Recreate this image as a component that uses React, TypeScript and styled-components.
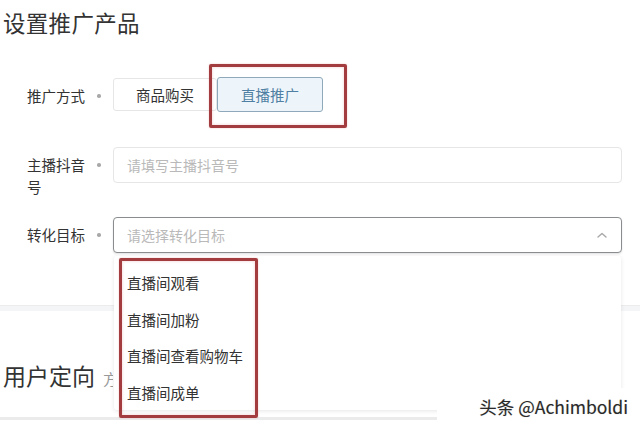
import styled, { createGlobalStyle } from "styled-components";

const GlobalStyle = createGlobalStyle`
  html, body {
    margin: 0;
    padding: 0;
    background: #fff;
  }
  body {
    font-family: "Noto Sans CJK SC", "Noto Sans", "Liberation Sans", sans-serif;
    color: #333;
  }
`;

const Page = styled.div`
  position: relative;
  width: 640px;
  height: 424px;
  overflow: hidden;
  background: #fff;
  display: flex;
  flex-direction: column;
`;

const Title = styled.h2`
  margin: 7px 0 0 3px;
  font-size: 22.5px;
  font-weight: 400;
  line-height: 30px;
  letter-spacing: 0.3px;
  color: #333;
`;

const Form = styled.div`
  margin-top: 41px;
  padding-left: 27px;
  padding-right: 18px;
  display: flex;
  flex-direction: column;
  gap: 35px;
`;

const Row = styled.div<{ $h: number; $gapFix?: number }>`
  height: ${(p) => p.$h}px;
  margin-top: ${(p) => p.$gapFix ?? 0}px;
  display: flex;
  align-items: flex-start;
`;

const Label = styled.div<{ $pad: number }>`
  width: 60px;
  padding-top: ${(p) => p.$pad}px;
  font-size: 14.5px;
  line-height: 22px;
  color: #333;
`;

const Required = styled.span<{ $pad: number }>`
  width: 26px;
  height: 22px;
  margin-top: ${(p) => p.$pad}px;
  display: flex;
  align-items: center;
  justify-content: center;
  padding-right: 2px;
  box-sizing: border-box;

  &::before {
    content: "";
    width: 3.5px;
    height: 3.5px;
    border-radius: 50%;
    background: #a9a9a9;
  }
`;

const Segment = styled.div`
  display: flex;
  height: 100%;
`;

const SegButton = styled.div<{ $active?: boolean }>`
  position: relative;
  box-sizing: border-box;
  width: ${(p) => (p.$active ? 106 : 104)}px;
  height: ${(p) => (p.$active ? 35 : 33)}px;
  margin-top: ${(p) => (p.$active ? -1 : 0)}px;
  display: flex;
  align-items: center;
  justify-content: center;
  font-size: 14.5px;
  color: ${(p) => (p.$active ? "#4f7fa3" : "#333")};
  background: ${(p) => (p.$active ? "#eef5fa" : "#fff")};
  border: 1px solid ${(p) => (p.$active ? "#8fa9bb" : "#e6e6e6")};
  border-radius: 3px;
`;

const Highlight = styled.div<{ $t: number; $l: number; $w: number; $h: number }>`
  position: absolute;
  top: ${(p) => p.$t}px;
  left: ${(p) => p.$l}px;
  width: ${(p) => p.$w}px;
  height: ${(p) => p.$h}px;
  box-sizing: border-box;
  border: 3px solid #a23c3e;
  border-radius: 2px;
  box-shadow: inset 0 0 3px rgba(220, 110, 110, 0.35), 0 0 2px rgba(220, 110, 110, 0.4);
  pointer-events: none;
`;

const Field = styled.div<{ $focused?: boolean }>`
  position: relative;
  flex: 1;
  box-sizing: border-box;
  height: 36px;
  display: flex;
  align-items: center;
  justify-content: space-between;
  padding: 0 14px 0 13px;
  border: 1px solid ${(p) => (p.$focused ? "#8a8d90" : "#e6e6e6")};
  border-radius: 4px;
  box-shadow: ${(p) => (p.$focused ? "0 1px 2px rgba(0,0,0,0.12)" : "none")};
  background: #fff;
`;

const Placeholder = styled.span`
  font-size: 14px;
  color: #b9b9b9;
`;

const Dropdown = styled.div`
  position: absolute;
  top: 38px;
  left: 0;
  right: 0;
  height: 154px;
  box-sizing: border-box;
  padding-top: 9px;
  background: #fff;
  border-radius: 3px;
  box-shadow: 0 1px 4px rgba(0, 0, 0, 0.1);
  z-index: 2;
`;

const Option = styled.div`
  height: 36.5px;
  line-height: 36.5px;
  padding-left: 13px;
  font-size: 14.5px;
  color: #333;
`;

const Divider = styled.div`
  margin-top: 52px;
  height: 5px;
  background: #f4f5f6;
  border-top: 1px solid #ececec;
`;

const SectionTitle = styled.div`
  margin: 48px 0 0 3px;
  display: flex;
  align-items: baseline;
  gap: 8px;
  line-height: 32px;
`;

const SectionName = styled.span`
  font-size: 23px;
  color: #333;
`;

const SectionHint = styled.span`
  width: 10px;
  overflow: hidden;
  white-space: nowrap;
  font-size: 15px;
  color: #999;
`;

const BottomBar = styled.div`
  margin-top: 22px;
  height: 3px;
  background: #ebebeb;
`;

const Watermark = styled.div`
  position: absolute;
  right: 0;
  bottom: 0;
  width: 203px;
  height: 36px;
  box-sizing: border-box;
  padding-right: 12px;
  background: #fff;
  display: flex;
  align-items: center;
  justify-content: flex-end;
  font-size: 17.5px;
  color: #2a2a2a;
  text-shadow: 0 0 1px #bbb;
  z-index: 3;
`;

const options = ["直播间观看", "直播间加粉", "直播间查看购物车", "直播间成单"];

const App = () => {
  return (
    <Page>
      <GlobalStyle />
      <Title>设置推广产品</Title>

      <Form>
        <Row $h={34}>
          <Label $pad={7}>推广方式</Label>
          <Required $pad={7} />
          <Segment>
            <SegButton>商品购买</SegButton>
            <SegButton $active>
              直播推广
              <Highlight $t={-14} $l={-9} $w={138} $h={64} />
            </SegButton>
          </Segment>
        </Row>

        <Row $h={36}>
          <Label $pad={7}>主播抖音号</Label>
          <Required $pad={7} />
          <Field>
            <Placeholder>请填写主播抖音号</Placeholder>
          </Field>
        </Row>

        <Row $h={36} $gapFix={-1}>
          <Label $pad={7}>转化目标</Label>
          <Required $pad={7} />
          <Field $focused>
            <Placeholder>请选择转化目标</Placeholder>
            <svg width="10" height="6" viewBox="0 0 10 6">
              <polyline
                points="1,5 5,1.5 9,5"
                fill="none"
                stroke="#a8a8a8"
                strokeWidth="1.4"
                strokeLinecap="round"
                strokeLinejoin="round"
              />
            </svg>
            <Dropdown>
              {options.map((o) => (
                <Option key={o}>{o}</Option>
              ))}
              <Highlight $t={2} $l={5} $w={139} $h={160} />
            </Dropdown>
          </Field>
        </Row>
      </Form>

      <Divider />

      <SectionTitle>
        <SectionName>用户定向</SectionName>
        <SectionHint>方式设置</SectionHint>
      </SectionTitle>

      <BottomBar />

      <Watermark>头条 @Achimboldi</Watermark>
    </Page>
  );
};

export default App;
